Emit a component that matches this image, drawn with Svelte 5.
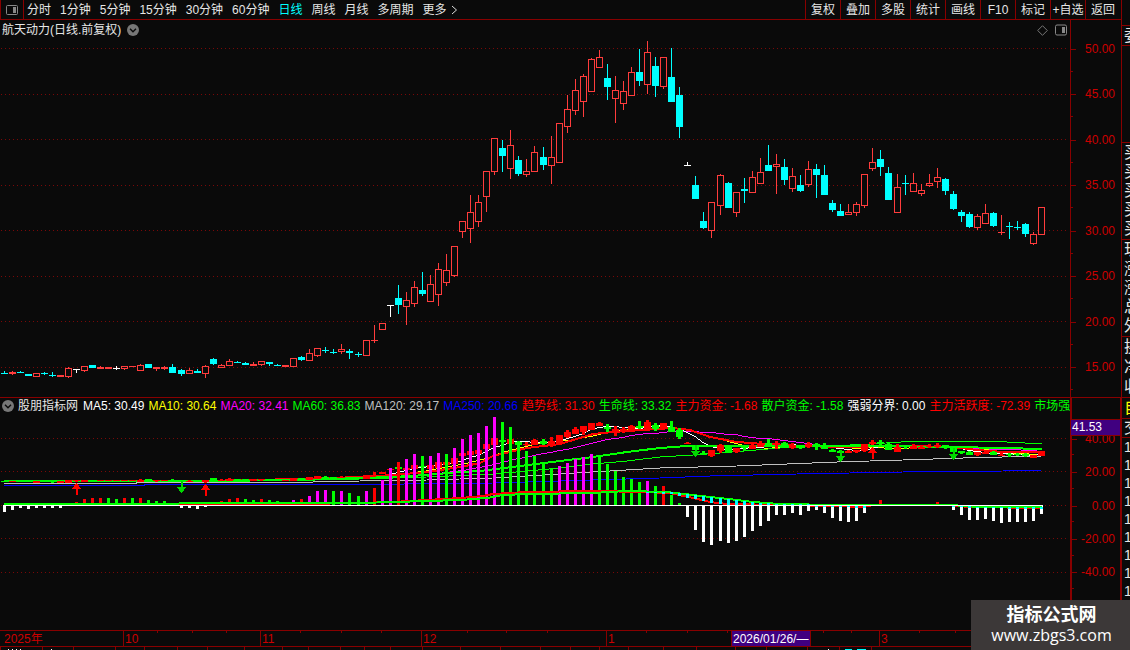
<script>
  const periods = ['分时', '1分钟', '5分钟', '15分钟', '30分钟', '60分钟', '日线', '周线', '月线', '多周期', '更多'];
  const tools = ['复权', '叠加', '多股', '统计', '画线', 'F10', '标记', '+自选', '返回'];
  const prices = ['50.00', '45.00', '40.00', '35.00', '30.00', '25.00', '20.00', '15.00'];
  const levels = ['40.00', '20.00', '0.00', '-20.00', '-40.00'];
  const legend = [
    ['MA5: 30.49', '#fff'], ['MA10: 30.64', '#ff0'], ['MA20: 32.41', '#f0f'], ['MA60: 36.83', '#0f0'],
    ['MA120: 29.17', '#c0c0c0'], ['MA250: 20.66', '#00f'], ['趋势线: 31.30', '#f00'], ['生命线: 33.32', '#0f0'],
    ['主力资金: -1.68', '#f00'], ['散户资金: -1.58', '#0f0'], ['强弱分界: 0.00', '#fff'],
    ['主力活跃度: -72.39', '#f00'], ['市场强', '#0f0']
  ];
  const months = [
    { text: '2025年', span: 123 }, { text: '10', span: 137 }, { text: '11', span: 161 }, { text: '12', span: 185 },
    { text: '1', span: 125 }, { text: '2026/01/26/—', span: 79, picked: true }, { text: '', span: 69 }, { text: '3', span: 242 }
  ];
  const monthCols = months.map((m) => `minmax(0, ${m.span}fr)`).join(' ');
  const weekTicks = [157, 192, 226, 300, 341, 381, 467, 506, 547, 646, 687, 727, 823, 851, 919, 955];
  const tabTicks = [0, 42, 73, 115, 144, 177, 207, 244, 282, 308, 340, 364, 390, 422, 460, 500, 540, 570, 599, 628, 663, 696, 735, 766, 807, 839, 871];
  const side = [
    { size: 19, rows: ['委'] }, { size: 96, rows: [] },
    { size: 96, rows: ['买', '买', '买', '买', '买'] },
    { size: 96, rows: ['现', '涨', '涨', '总', '外'] },
    { size: 60, rows: ['换', '净', '收'] }
  ];

  // kind, high, body top, body bottom, low
  const raw = `c371,373,373,373 r371,372,373,374 c371,372,372,372 c374,374,375,375 r373,373,376,376 c372,373,373,374
c372,375,375,376 r375,375,376,376 r367,368,376,377 w369,369,369,372 r366,366,370,371 c365,365,367,367 r366,367,368,368
r367,367,368,368 w366,368,368,369 r366,366,368,369 r366,366,366,366 r364,365,370,370 c364,364,367,367 r367,367,368,370
r366,367,368,369 c364,367,372,372 c369,370,373,375 r368,370,373,373 c369,371,372,372 r365,366,373,377 c358,359,363,364
r364,365,367,367 r359,361,365,365 c361,362,362,362 c362,363,364,364 r362,364,365,365 r361,361,364,365 c362,362,363,365
c364,365,365,365 r365,365,366,366 r358,358,366,366 c356,357,359,360 r349,353,360,360 r348,348,355,356 c347,350,350,352
c349,352,352,353 r344,349,351,353 c349,351,352,358 c352,354,354,356 r340,340,355,355 r325,340,340,342 r323,323,329,329
w305,305,305,316 c285,298,304,313 r292,300,306,324 r281,287,303,306 c272,290,293,295 r275,284,301,301 r263,269,294,305
r254,270,282,285 r246,246,275,276 r221,221,231,237 r195,212,228,242 r195,202,221,226 r171,171,196,211 r138,138,171,174
c140,148,155,171 r130,145,168,178 c156,160,173,175 r159,171,174,176 r146,152,171,171 c147,157,164,169 r136,157,165,183
r123,123,162,162 r95,109,126,132 r79,90,110,114 r74,76,101,116 r58,59,91,91 r50,57,67,67 c64,78,86,99 r76,90,98,122
r81,91,103,109 r67,72,95,95 c49,72,80,85 r41,52,84,93 c57,66,85,96 r57,57,86,88 c48,77,101,101 c87,95,126,137
w162,165,165,165 c176,185,198,198 c212,221,227,228 r202,202,230,237 r174,175,205,214 c182,183,207,207 r192,192,212,216
c178,189,190,202 r171,177,192,192 r158,172,183,183 c145,165,170,170 r154,164,166,193 c159,167,179,184 r168,176,188,191
c175,185,190,191 r161,169,184,186 c164,169,174,197 c165,175,194,194 c200,203,209,211 c204,211,215,215 r204,212,214,214
r202,204,212,215 r174,174,205,207 r148,162,168,170 c150,159,166,175 c167,173,199,199 r174,187,212,212 c175,183,183,194
r173,183,191,191 r184,190,193,195 r174,183,185,186 r168,177,181,187 c178,179,190,194 c191,194,208,209 c210,212,215,221
c212,214,226,227 r214,216,227,229 r204,213,223,223 c212,213,225,226 r215,232,232,234 c222,226,226,238 c221,227,227,229
c223,224,233,236 r232,234,243,244 r207,207,234,234`;

  const xAt = (i) => 4 + 8 * i + Math.floor((i + 0.6) / 22.25);
  const candles = raw.split(/\s+/).map((s, i) => {
    const [hi, top, bot, lo] = s.slice(1).split(',').map(Number);
    return { kind: s[0], hi, top, bot, lo, x: xAt(i) };
  });
  const tone = { r: '#ff3c3c', c: '#00ffff', w: '#ffffff' };

  // price pane coordinate -> indicator pane coordinate
  const toLower = (y) => 421.3 + (y - 48.3) * 0.1841;
  const mini = candles.map((c) => {
    const [hi, top, bot, lo] = [c.hi, c.top, c.bot, c.lo].map((v) => Math.round(toLower(v)));
    return { x: c.x, hi, top, bot, lo, fill: c.kind === 'c' ? '#0f0' : '#f00' };
  });

  const closes = candles.map((c) => (c.kind === 'c' ? c.bot : c.top));
  function average(n) {
    return closes.map((_, i) => {
      let sum = 0;
      for (let k = i - n + 1; k <= i; k++) sum += k < 0 ? 372 : closes[k];
      return `${xAt(i)},${Math.round(toLower(sum / n)) + 0.5}`;
    }).join(' ');
  }

  const life = '4,481 200,481 300,480 360,478 393,477 427,475 460,472 480,471 520,466 560,461 593,457 627,452 660,448 687,446 870,446 953,447 1003,448 1042,449';
  const trend = '4,481 200,481 300,479 360,477 393,475 427,472 460,467 480,463 493,456 510,452 527,448 560,444 580,438 593,434 613,432 643,430 673,428 690,430 710,437 737,442 763,444 803,446 837,447 903,446 953,447 977,450 1003,452 1042,452';
  const ma60 = '4,482 300,480 360,479 427,477 493,474 527,471 560,468 593,464 627,461 660,457 693,455 720,453 780,448 830,446 870,444 917,441 990,441 1042,444';
  const ma120 = '4,483.5 136,483.5 137,482.5 290,482.5 360,481 427,480 493,478 527,476 593,472 660,468 737,466 837,462 903,460 963,458 1042,456';
  const ma250 = '4,485.5 144,485.5 145,484.5 360,484.5 493,483 593,480 660,478 710,476 797,474 903,472 1003,471 1042,470';

  const retail = [[4, 504], [360, 503], [427, 501], [460, 500], [487, 498], [503, 495], [527, 494], [593, 493], [627, 491], [667, 492], [693, 495], [710, 497], [737, 500], [753, 502], [780, 504], [837, 505], [950, 505], [980, 507], [1042, 507]];
  const major = [[4, 505], [300, 504], [360, 503], [393, 502], [427, 500], [460, 498], [483, 496], [493, 494], [527, 492], [593, 491], [643, 492], [670, 493], [693, 498], [710, 502], [727, 504], [837, 506], [863, 507], [873, 505], [947, 505], [970, 507], [1042, 508]];
  const join = (pts) => pts.map((p) => p.join(',')).join(' ');
  function sample(pts, x) {
    const k = Math.max(1, pts.findIndex((p) => p[0] >= x));
    const [a, b] = [pts[k - 1], pts[k]];
    return a[1] + ((b[1] - a[1]) * (x - a[0])) / (b[0] - a[0]);
  }
  const cyanMarks = candles.slice(80).map((c) => {
    const a = Math.round(sample(retail, c.x));
    const b = Math.round(sample(major, c.x));
    return { x: c.x - 1, y: Math.min(a, b), h: Math.max(1, Math.abs(b - a) + 1) };
  });

  // colour and tip of each activity bar
  const bars = `w512 w510 w508 w509 w508 w508 w508 w508 r504 r502 r499 r498 r498 g498 g499 r498 g498 r498 g500 g501 g501 g505
w508 w508 w509 w507 r503 r501 r499 r498 g499 g500 r499 g500 g501 g502 m500 r499 m496 m491 m490 g491 m491 g493 g496
m491 r488 m480 m468 r462 m459 m454 g456 m456 m453 g454 m448 m439 m435 m433 m426 m417 g422 g427 g442 g451 g456 g464
g469 m466 m463 m459 m457 m454 g455 g464 g471 g477 g479 g482 m481 g486 r486 g495 g503 w517 w530 w542 w545 w541 w543
w541 w537 w531 w526 w521 w515 w515 w513 w515 w511 w510 w513 w518 w521 w522 w521 w513 r504 r500 r504 r504 r504 r504
r504 r504 r502 r504 w510 w515 w520 w520 w519 w521 w523 w522 w522 w522 w521 w514`.split(/\s+/).map((s, i) => {
    const tip = Number(s.slice(1));
    return { x: xAt(i) - 1, y: Math.min(tip, 505), h: Math.abs(tip - 505), fill: { w: '#fff', r: '#f00', g: '#0f0', m: '#f0f' }[s[0]] };
  });
  const ups = [[76, 483], [205, 484], [872, 447]];
  const downs = [[181, 493], [695, 457], [840, 462], [953, 460]];
</script>

<div class="app">
  <main>
    <nav class="toolbar">
      <button class="dock" aria-label="侧栏">
        <svg width="12" height="12" viewBox="0 0 12 12"><rect x=".5" y="1.5" width="11" height="9" rx="1" fill="none" stroke="#888" /><rect x="7" y="3" width="3" height="6" fill="#888" /></svg>
      </button>
      <div class="periods">
        {#each periods as p}
          <button class:active={p === '日线'}>{p}{#if p === '更多'}<svg class="more" width="7" height="10" viewBox="0 0 7 10"><path d="M1 1l4.5 4L1 9" fill="none" stroke="#ddd" /></svg>{/if}</button>
        {/each}
      </div>
      <div class="tools">
        {#each tools as t}<button>{t}</button>{/each}
      </div>
    </nav>

    <section class="pane price">
      <div class="plot">
        <svg class="canvas" viewBox="0 20 1070 377" preserveAspectRatio="none" aria-hidden="true">
          {#each [48, 94, 139, 185, 230, 276, 321, 367] as y}
            <line x1="1" x2="1068" y1={y + 0.5} y2={y + 0.5} class="dots" />
          {/each}
          {#each candles as c}
            <rect x={c.x} y={c.hi} width="1" height={c.top - c.hi} fill={tone[c.kind]} />
            <rect x={c.x} y={c.bot} width="1" height={c.lo - c.bot + 1} fill={tone[c.kind]} />
            {#if c.kind === 'r' && c.bot - c.top > 1}
              <rect x={c.x - 2.5} y={c.top + 0.5} width="6" height={c.bot - c.top} fill="#0a0a0a" stroke={tone.r} />
            {:else}
              <rect x={c.x - 3} y={c.top} width="7" height={c.bot - c.top + 1} fill={tone[c.kind]} />
            {/if}
          {/each}
        </svg>
        <header class="title">
          <span>航天动力(日线.前复权)</span>
          <button class="fold" aria-label="展开"><svg width="12" height="12" viewBox="0 0 12 12"><circle cx="6" cy="6" r="6" fill="#777" /><path d="M3 4.7l3 3 3-3" fill="none" stroke="#0a0a0a" stroke-width="1.4" /></svg></button>
          <span class="marks">
            <svg width="11" height="11" viewBox="0 0 11 11"><path d="M5.5 .7L10.3 5.5 5.5 10.3 .7 5.5z" fill="none" stroke="#777" /></svg>
            <svg width="12" height="12" viewBox="0 0 12 12"><rect x=".5" y="1" width="11" height="10" rx="1.5" fill="none" stroke="#888" /><rect x="7" y="3" width="3" height="6" fill="#888" /></svg>
          </span>
        </header>
      </div>
      <div class="axis">{#each prices as p}<span>{p}</span>{/each}</div>
    </section>

    <section class="pane lower">
      <div class="plot">
        <svg class="canvas" viewBox="0 398 1070 232" preserveAspectRatio="none" aria-hidden="true">
          {#each [438, 471, 505, 538, 572] as y}
            <line x1="1" x2="1068" y1={y + 0.5} y2={y + 0.5} class="dots" />
          {/each}
          <polyline points={ma250} stroke="#00f" />
          <polyline points={ma120} stroke="#c0c0c0" />
          <polyline points={average(20)} stroke="#f0f" />
          <polyline points={average(10)} stroke="#ff0" />
          <polyline points={average(5)} stroke="#fff" />
          <polyline points={ma60} stroke="#0f0" />
          <polyline points={trend} stroke="#f00" stroke-width="2" />
          <polyline points={life} stroke="#0f0" stroke-width="2" />
          {#each mini as m}
            <rect x={m.x - 1} y={m.hi} width="3" height={m.lo - m.hi + 1} fill={m.fill} />
            <rect x={m.x - 3} y={m.top} width="7" height={m.bot - m.top + 1} fill={m.fill} />
          {/each}
          {#each bars as b}<rect x={b.x} y={b.y} width="3" height={b.h} fill={b.fill} />{/each}
          <polyline points={join(major)} stroke="#f00" stroke-width="2" />
          <polyline points={join(retail)} stroke="#0f0" stroke-width="2" />
          {#each cyanMarks as m}<rect x={m.x} y={m.y} width="3" height={m.h} fill="#0ff" />{/each}
          <rect x="3" y="505" width="1040" height="1" fill="#fff" />
          {#each ups as [x, y]}<path d="M{x + 0.5} {y}l5 6h-4v6h-2v-6h-4z" fill="#f00" />{/each}
          {#each downs as [x, y]}<path d="M{x + 0.5} {y}l5-6h-4v-6h-2v6h-4z" fill="#00d800" />{/each}
        </svg>
        <header class="legend">
          <button class="fold" aria-label="展开"><svg width="12" height="12" viewBox="0 0 12 12"><circle cx="6" cy="6" r="6" fill="#777" /><path d="M3 4.7l3 3 3-3" fill="none" stroke="#0a0a0a" stroke-width="1.4" /></svg></button>
          <span class="name">股朋指标网</span>
          {#each legend as [text, color]}<span style="color: {color}">{text}</span>{/each}
        </header>
      </div>
      <div class="axis">
        {#each levels as l}<span>{l}</span>{/each}
        <output class="cursor">41.53</output>
      </div>
    </section>

    <div class="dates">
      <svg class="canvas" viewBox="0 0 1121 15" preserveAspectRatio="none" aria-hidden="true">
        {#each weekTicks as x}<rect {x} y="0" width="1" height="2" fill="#880000" />{/each}
      </svg>
      <div class="months" style="grid-template-columns: {monthCols}">
        {#each months as m}<span class:picked={m.picked}>{m.text}</span>{/each}
      </div>
    </div>
    <div class="tabs">
      <svg class="canvas" viewBox="0 0 1121 3" preserveAspectRatio="none" aria-hidden="true">
        {#each tabTicks as x}<rect {x} y="0" width="1" height="3" fill="#880000" />{/each}
        {#each [8, 12, 16, 20, 51, 828] as x}<rect {x} y="2" width="1" height="1" fill="#fff" />{/each}
        <rect x="845" y="2" width="7" height="1" fill="#0ff" /><rect x="857" y="2" width="9" height="1" fill="#0ff" />
      </svg>
    </div>
  </main>

  <aside>
    {#each side as g}
      <div class="group" style="flex-grow: {g.size}">{#each g.rows as r}<span>{r}</span>{/each}</div>
    {/each}
    <div class="group own">自</div>
    <div class="group trade">交</div>
    <div class="ticks">{#each Array(9) as _}<span>1</span>{/each}</div>
  </aside>

  <div class="watermark"><strong>指标公式网</strong><span>www.zbgs3.com</span></div>
</div>

<style>
  :global(body) { margin: 0; background: #0a0a0a; }
  .app {
    --line: #880000;
    position: relative;
    display: grid;
    grid-template-columns: minmax(0, 1fr) 9px;
    height: 100vh;
    overflow: hidden;
    background: #0a0a0a;
    color: #e6e6e6;
    font: 12px/16px "Liberation Sans", "Noto Sans CJK SC", sans-serif;
  }
  main {
    display: grid;
    grid-template-rows: 20px minmax(0, 377fr) minmax(0, 233fr) 16px 4px;
    min-width: 0;
  }
  button { padding: 0; border: 0; background: none; color: inherit; font: inherit; white-space: nowrap; }
  svg { display: block; }
  .toolbar { display: flex; border-bottom: 1px solid var(--line); box-sizing: border-box; overflow: hidden; }
  .dock { display: grid; place-items: center; flex: none; width: 24px; border: solid var(--line); border-width: 0 1px; box-sizing: border-box; }
  .periods { display: flex; gap: 9px; padding-left: 3px; }
  .periods button { display: flex; align-items: center; gap: 4px; }
  .periods .active { color: #00ffff; }
  .tools { display: flex; margin-left: auto; padding-right: 1px; }
  .tools button { width: 35px; border-left: 1px solid var(--line); box-sizing: border-box; }
  .pane { display: grid; grid-template-columns: minmax(0, 1fr) 51px; min-height: 0; box-sizing: border-box; }
  .plot { display: grid; grid-template: minmax(0, 1fr) / minmax(0, 1fr); overflow: hidden; }
  .plot > * { grid-area: 1 / 1; }
  .canvas { width: 100%; height: 100%; min-height: 0; shape-rendering: crispEdges; }
  .canvas polyline { fill: none; }
  .dots { stroke: #7a0808; stroke-dasharray: 1 3; }
  .title { display: flex; align-items: center; align-self: start; gap: 6px; padding: 2px 3px 0 2px; }
  .marks { display: flex; align-items: center; gap: 7px; margin-left: auto; }
  .legend { display: flex; align-items: center; align-self: start; gap: 4px; padding-left: 2px; white-space: nowrap; overflow: hidden; }
  .legend > * { flex: none; }
  .legend .name { padding-right: 1px; }
  .axis { position: relative; display: flex; flex-direction: column; border-left: 1px solid var(--line); box-sizing: border-box; color: #cc0000; text-align: right; }
  .axis span { position: relative; display: flex; flex: 1 1 0; align-items: center; justify-content: flex-end; padding-right: 6px; }
  .axis span::before, .axis span::after { content: ""; position: absolute; left: 0; height: 1px; background: var(--line); }
  .axis span::before { top: 50%; width: 5px; }
  .axis span::after { bottom: 0; width: 2px; }
  .price .axis { padding: 6px 0 7px; }
  .lower { border-top: 1px solid var(--line); }
  .lower .axis { padding: 24px 0 41px; border-left-width: 2px; border-right: 1px solid var(--line); }
  .lower .axis span { padding-right: 5px; }
  .cursor { position: absolute; top: 21px; left: -1px; right: 0; border: solid var(--line); border-width: 1px 0; background: #400080; color: #fff; line-height: 15px; text-align: left; padding-left: 1px; }
  .dates { display: grid; grid-template: minmax(0, 1fr) / minmax(0, 1fr); border-top: 1px solid var(--line); color: #cc0000; }
  .dates > * { grid-area: 1 / 1; }
  .months { display: grid; line-height: 16px; }
  .months span { padding-left: 1px; border-left: 1px solid var(--line); white-space: nowrap; overflow: hidden; }
  .months span:first-child { border: 0; padding-left: 4px; }
  .months .picked { background: #400080; color: #fff; }
  .tabs { border-top: 1px solid var(--line); }
  aside { display: flex; flex-direction: column; border-left: 1px solid var(--line); padding-top: 25px; box-sizing: border-box; overflow: hidden; font-size: 16px; }
  .group { display: flex; flex: 1 1 0; flex-direction: column; min-height: 0; border-top: 1px solid var(--line); padding-left: 2px; }
  .group span { display: grid; flex: 1 1 0; align-items: center; }
  .own { flex: 20 1 0; color: #ffff00; line-height: 20px; }
  .trade { flex: 18 1 0; line-height: 18px; }
  .ticks { display: flex; flex: 212 1 0; flex-direction: column; min-height: 0; border-top: 1px solid var(--line); padding-left: 2px; font-size: 14px; line-height: 18px; }
  .watermark { position: absolute; right: 0; bottom: 0; display: flex; flex-direction: column; align-items: center; justify-content: center; width: 159px; height: 50px; padding-left: 2px; box-sizing: border-box; background: #3c3838; color: #fff; font: 16px/22px "Open Sans", "Noto Sans CJK SC", sans-serif; }
  .watermark strong { font-size: 18px; font-weight: 700; line-height: 20px; }
</style>
